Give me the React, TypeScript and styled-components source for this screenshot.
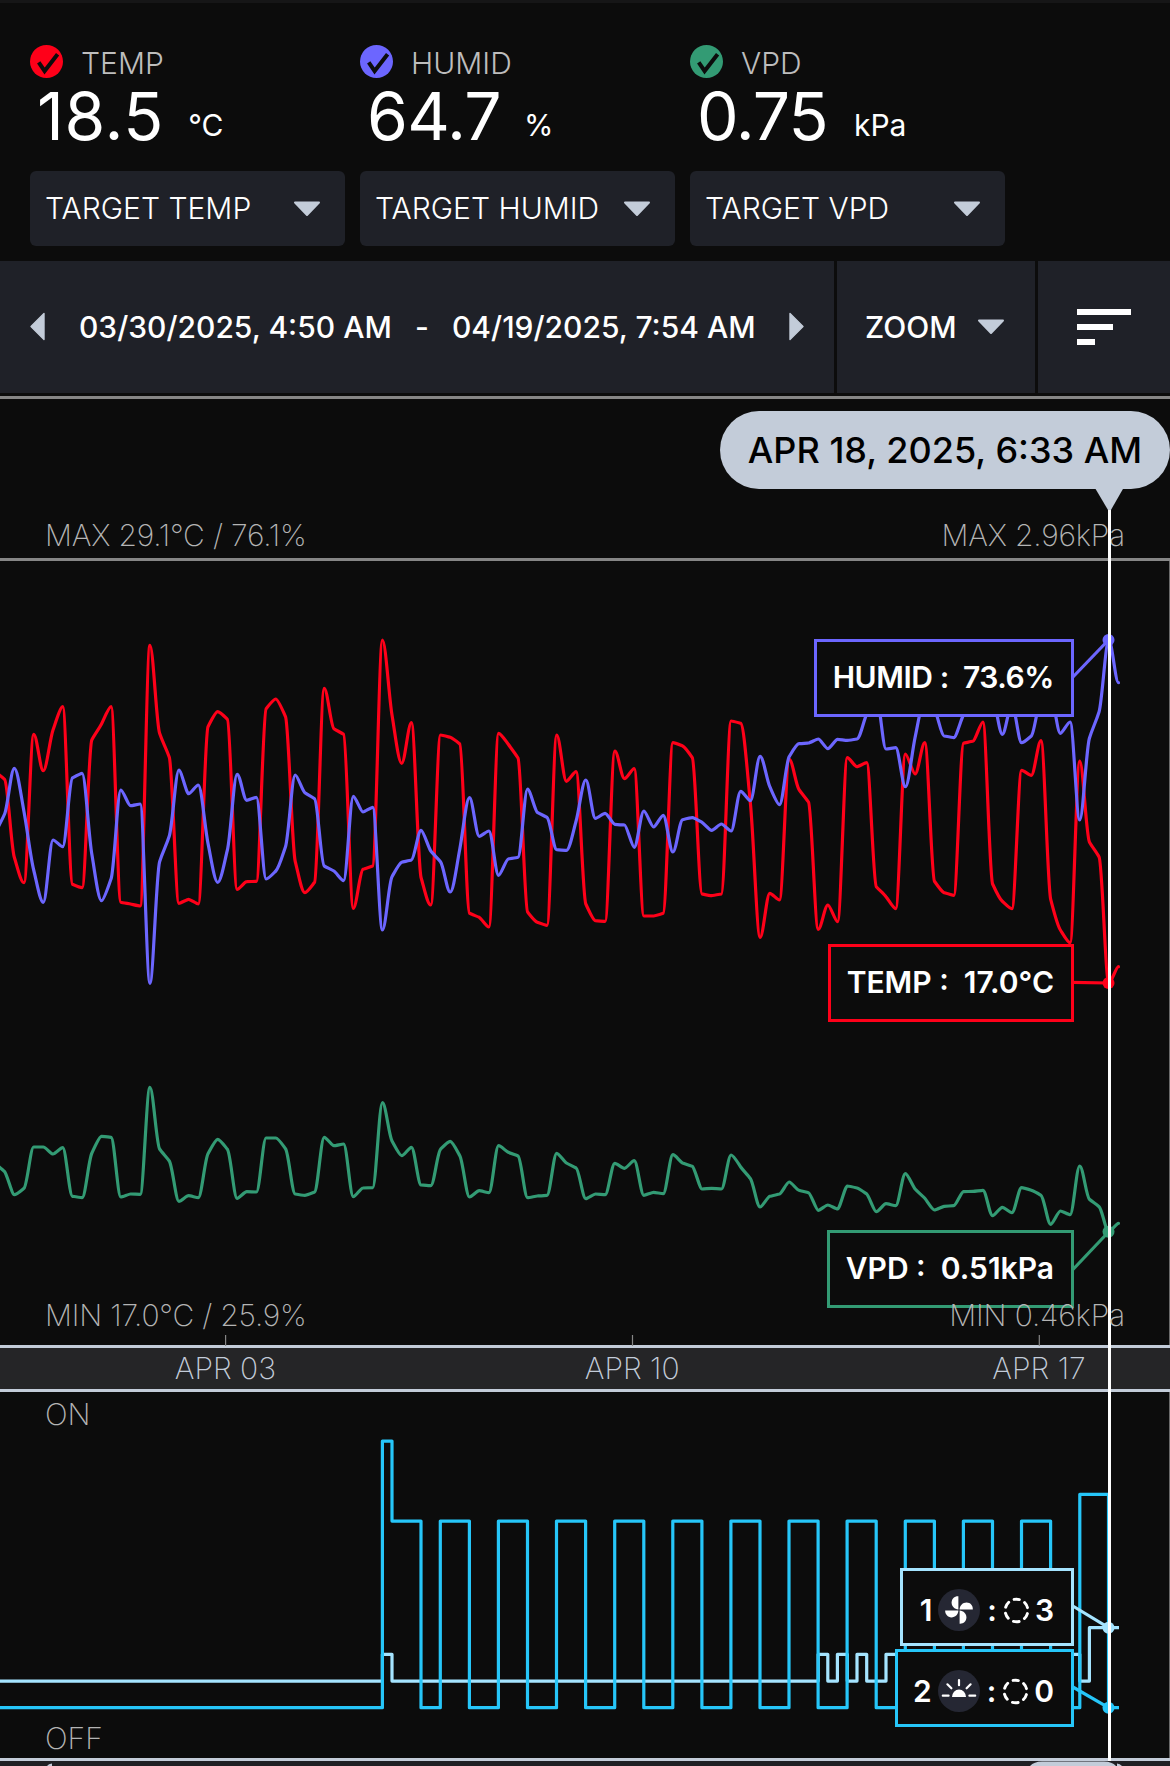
import React from "react";
import styled, { createGlobalStyle } from "styled-components";

const RED = "#ff0019";
const VIOLET = "#6c66ff";
const GREEN = "#339b74";
const CYAN = "#26c6f9";
const ICE = "#a5e4ff";
const STEEL = "#c3ccd9";
const INK = "#0c0c0c";
const SLATE = "#1f2128";

const Global = createGlobalStyle`
  * { box-sizing: border-box; }
  body { margin: 0; background: ${INK}; overflow: hidden; }
`;

const Page = styled.main`
  width: 1170px;
  height: 1766px;
  overflow: hidden;
  display: flex;
  flex-direction: column;
  background: ${INK};
  border-top: 3px solid #161617;
  color: #fff;
  font-family: Inter, "Liberation Sans", sans-serif;
  font-size: 30px;
  line-height: 30px;
`;

/* ---------- readings ---------- */

const Readings = styled.section`
  display: flex;
  gap: 15px;
  height: 258px;
  padding: 42px 30px 0;
`;

const Reading = styled.div`
  width: 315px;
  display: flex;
  flex-direction: column;
`;

const ReadingHead = styled.div`
  display: flex;
  height: 33px;
  gap: 18px;
`;

const ReadingName = styled.span`
  padding-top: 2px;
  line-height: 33px;
  font-weight: 300;
  color: #bdbdbd;
`;

const ReadingValue = styled.div`
  display: flex;
  height: 93px;
  padding-left: 7px;
`;

const Amount = styled.span<{ $track: number }>`
  font-size: 66px;
  line-height: 76px;
  font-weight: 400;
  letter-spacing: ${(p) => p.$track}px;
`;

const Unit = styled.span<{ $gap: number }>`
  margin: 32px 0 0 ${(p) => p.$gap}px;
`;

const TargetButton = styled.button`
  display: flex;
  align-items: center;
  justify-content: space-between;
  width: 100%;
  height: 75px;
  padding: 0 23px 0 15px;
  border: 0;
  border-radius: 6px;
  background: ${SLATE};
  color: #fff;
  font: inherit;
  font-weight: 300;
`;

const TargetText = styled.span`
  margin-top: -1px;
  white-space: nowrap;
`;

/* ---------- toolbar ---------- */

const Toolbar = styled.nav`
  display: grid;
  grid-template-columns: 834px 198px 1fr;
  gap: 3px;
  height: 132px;
  margin-bottom: 3px;
`;

const ToolCell = styled.div<{ $pad: string }>`
  display: flex;
  align-items: center;
  padding: ${(p) => p.$pad};
  background: ${SLATE};
`;

const DateText = styled.span<{ $width: number; $lead?: number }>`
  width: ${(p) => p.$width}px;
  margin-left: ${(p) => p.$lead ?? 0}px;
  font-weight: 500;
  white-space: nowrap;
`;

const ZoomText = styled.span`
  width: 111px;
  font-weight: 450;
`;

/* ---------- chart ---------- */

const Chart = styled.section`
  position: relative;
  display: flex;
  flex-direction: column;
`;

const Overlay = styled.svg`
  position: absolute;
  inset: 0;
  width: 1170px;
  height: 1370px;
`;

const Label = styled.span<{ $track?: number }>`
  font-weight: 200;
  color: #b4b4b4;
  letter-spacing: ${(p) => p.$track ?? 0}px;
  white-space: nowrap;
`;

const MaxBand = styled.div`
  display: flex;
  align-items: flex-end;
  justify-content: space-between;
  height: 165px;
  padding: 0 45px 8px 45px;
  border: solid #868686;
  border-width: 3px 0;
`;

const Plot = styled.div`
  display: flex;
  align-items: flex-end;
  justify-content: space-between;
  height: 784px;
  padding: 0 44px 15px 45px;
  border-right: 1px solid #6a6a6a;
`;

const Above = styled.div`
  position: relative;
  z-index: 2;
`;

const Axis = styled.div`
  display: grid;
  grid-template-columns: repeat(3, 406.8px);
  align-items: center;
  justify-items: center;
  height: 47px;
  padding: 0 0 2px 22px;
  overflow: hidden;
  background: #252527;
  border: solid ${STEEL};
  border-width: 3px 0;
`;

const AxisLabel = styled(Label)`
  color: ${STEEL};
`;

const Devices = styled.div`
  display: flex;
  flex-direction: column;
  justify-content: space-between;
  height: 366px;
  padding: 7px 45px 5px;
  border-right: 1px solid #6a6a6a;
`;

const Footer = styled.div`
  height: 8px;
  background: #1f1f23;
  border-top: 3px solid ${STEEL};
`;

const Callout = styled.div<{ $top: number; $color: string; $width: number; $track?: number }>`
  position: absolute;
  right: 96px;
  top: ${(p) => p.$top}px;
  width: ${(p) => p.$width}px;
  height: 78px;
  display: flex;
  align-items: center;
  justify-content: flex-end;
  padding: 0 17px 2px 0;
  border: 3px solid ${(p) => p.$color};
  background: ${INK};
  font-weight: 600;
  letter-spacing: ${(p) => p.$track ?? 0}px;
  white-space: pre;
`;

const DeviceIcon = styled.svg`
  width: 42px;
  height: 42px;
  margin: 9px 7px 0 6px;
`;

const Ring = styled.svg`
  width: 27px;
  height: 27px;
  margin: 9px 5px 0 6px;
`;

const DeviceText = styled.span`
  padding-top: 9px;
`;

const TimeBubble = styled.div`
  position: absolute;
  right: 0;
  top: 15px;
  width: 450px;
  height: 78px;
  display: flex;
  align-items: center;
  justify-content: center;
  border-radius: 39px;
  background: ${STEEL};
  color: #000;
  font-size: 36px;
  font-weight: 500;
  white-space: nowrap;
`;

/* ---------- data ---------- */

// One sample every four hours; values are heights on the plot, in thirds of a pixel.
const STEP = 9.686;
const FIRST = 4.6 - STEP;

const temp = [
  455, 478, 712, 788, 343, 452, 330, 260, 793, 803, 360, 312, 260, 847, 852, 858, 76, 340, 412, 850,
  838, 852, 320, 275, 298, 808, 785, 784, 266, 237, 290, 724, 818, 787, 205, 326, 343, 865, 748, 738,
  60, 285, 430, 308, 773, 855, 345, 352, 372, 880, 892, 921, 340, 373, 414, 876, 907, 916, 345, 484,
  455, 852, 902, 904, 393, 476, 446, 888, 888, 880, 368, 378, 413, 822, 827, 822, 303, 310, 550, 952,
  820, 840, 418, 508, 546, 928, 855, 905, 413, 440, 428, 800, 830, 866, 402, 462, 368, 784, 818, 826,
  370, 363, 306, 792, 844, 866, 451, 466, 362, 838, 930, 968, 423, 666, 711, 1090, 1040,
];

const humid = [
  640, 582, 445, 575, 750, 847, 660, 680, 474, 460, 702, 842, 776, 510, 557, 552, 1090, 725, 648, 450,
  521, 495, 670, 787, 690, 463, 541, 532, 777, 753, 680, 465, 518, 536, 738, 753, 782, 529, 576, 562,
  930, 770, 727, 720, 631, 693, 725, 816, 687, 533, 649, 633, 766, 717, 712, 507, 577, 592, 689, 691,
  603, 480, 595, 580, 613, 615, 682, 573, 621, 586, 696, 599, 593, 607, 631, 612, 633, 514, 542, 409,
  500, 554, 410, 371, 369, 357, 386, 358, 361, 357, 282, 230, 387, 383, 500, 352, 240, 270, 348, 353,
  285, 250, 240, 240, 343, 255, 368, 348, 240, 230, 340, 306, 600, 355, 275, 60, 188,
];

const vpd = [
  310, 335, 404, 385, 261, 261, 282, 263, 409, 413, 280, 229, 232, 411, 402, 403, 82, 267, 303, 424,
  407, 413, 281, 238, 268, 415, 395, 396, 234, 234, 266, 402, 406, 396, 232, 257, 252, 410, 384, 383,
  128, 243, 287, 262, 375, 377, 268, 244, 287, 411, 392, 398, 257, 277, 288, 413, 408, 406, 280, 309,
  324, 416, 402, 404, 310, 325, 302, 406, 397, 401, 284, 309, 319, 387, 385, 387, 285, 321, 356, 441,
  409, 402, 366, 391, 398, 451, 435, 447, 378, 384, 402, 455, 431, 437, 341, 387, 415, 450, 439, 437,
  395, 394, 391, 467, 442, 458, 383, 391, 406, 493, 453, 464, 318, 418, 440, 515, 490,
];

// Monotone cubic interpolation. Gentle segments get short handles, which keeps
// them nearly straight, while steep ones ease in and out of their samples.
function smoothPath(values: number[], base: number): string {
  const ys = values.map((v) => base + v / 3);
  const last = ys.length - 1;
  const slope = (i: number) => (ys[i + 1] - ys[i]) / STEP;
  const tangent = ys.map((_, i) => {
    if (i === 0) return slope(0);
    if (i === last) return 0;
    const a = slope(i - 1);
    const b = slope(i);
    if (a * b <= 0) return 0;
    return Math.sign(a) * Math.min(Math.abs(a), Math.abs(b)) * 1.2;
  });
  let d = `M${FIRST.toFixed(1)} ${ys[0].toFixed(1)}`;
  for (let i = 0; i < last; i++) {
    const x0 = FIRST + i * STEP;
    const rise = Math.abs(ys[i + 1] - ys[i]);
    const h = STEP * (rise < 5 ? 0.16 : rise < 24 ? 0.24 : 0.33);
    d += `C${(x0 + h).toFixed(1)} ${(ys[i] + tangent[i] * h).toFixed(1)} ${(x0 + STEP - h).toFixed(1)} ${(
      ys[i + 1] -
      tangent[i + 1] * h
    ).toFixed(1)} ${(x0 + STEP).toFixed(1)} ${ys[i + 1].toFixed(1)}`;
  }
  return d;
}

const level = (n: number) => 1707.7 - n * 26.667;

// Each pair is [x where the level starts, level].
function stepPath(steps: [number, number][], end: number): string {
  return (
    steps.map(([x, n], i) => (i === 0 ? `M${x} ${level(n)}` : `H${x}V${level(n)}`)).join("") + `H${end}`
  );
}

const lightSteps: [number, number][] = [[0, 0], [382.4, 10], [392, 7], [421, 0]];
for (let i = 0; i < 11; i++) {
  lightSteps.push([+(440.3 + i * 58.12).toFixed(1), 7], [+(469.4 + i * 58.12).toFixed(1), 0]);
}
lightSteps.push([1079.8, 8], [1108.5, 0]);

const fanSteps: [number, number][] = [
  [0, 1], [382.4, 2], [392, 1], [818.2, 2], [827.8, 1], [837.4, 2], [847.3, 1],
  [857, 2], [866.7, 1], [886, 2], [1079.8, 1], [1089.4, 3],
];

/* ---------- icons ---------- */

const CheckBadge = ({ color }: { color: string }) => (
  <svg width="33" height="33" viewBox="0 0 33 33">
    <circle cx="16.5" cy="16.5" r="16.5" fill={color} />
    <path d="M8.7 17.4 L14.6 26 L27.6 9.2" fill="none" stroke={INK} strokeWidth="4" />
  </svg>
);

const Caret = () => (
  <svg width="30" height="16" viewBox="0 0 30 16">
    <path d="M3 1.5H27L15 14Z" fill={STEEL} stroke={STEEL} strokeWidth="2" strokeLinejoin="round" />
  </svg>
);

const SideArrow = ({ flip }: { flip?: boolean }) => (
  <svg width="15" height="30" viewBox="0 0 15 30">
    <path
      d={flip ? "M1 1.5V27.5L14 14.5Z" : "M14 1.5V27.5L1 14.5Z"}
      fill={STEEL}
      stroke={STEEL}
      strokeWidth="1.4"
      strokeLinejoin="round"
    />
  </svg>
);

const SortIcon = () => (
  <svg width="54" height="36" viewBox="0 0 54 36" fill="#fff">
    <path d="M0 0H54V6H0ZM0 15H36V21H0ZM0 30H18V36H0Z" />
  </svg>
);

const FanIcon = () => (
  <DeviceIcon viewBox="0 0 42 42">
    <circle cx="21" cy="21" r="21" fill="#252733" />
    {[0, 90, 180, 270].map((a) => (
      <path
        key={a}
        transform={`rotate(${a} 21 21)`}
        d="M20.4 20.4V7.2C16.5 7 13.6 9.8 13.6 13.4C13.6 17.2 16.4 20.2 20.4 20.4Z"
        fill="#fff"
      />
    ))}
  </DeviceIcon>
);

const SunIcon = () => (
  <DeviceIcon viewBox="0 0 42 42">
    <circle cx="21" cy="21" r="21" fill="#252733" />
    <path d="M14 27A7 7.6 0 0 1 28 27Z" fill="#fff" />
    <path
      d="M4.8 25.7H10.6M31.4 25.7H37.2M9.4 14.3L13.4 18.3M32.6 14.3L28.6 18.3M21 10V15.2"
      stroke="#fff"
      strokeWidth="2.2"
      strokeLinecap="round"
    />
  </DeviceIcon>
);

const LevelRing = () => (
  <Ring viewBox="0 0 26 26">
    <circle
      cx="13"
      cy="13"
      r="10.9"
      fill="none"
      stroke="#fff"
      strokeWidth="2.8"
      strokeLinecap="round"
      strokeDasharray="5.6 5.81"
      strokeDashoffset="2.8"
      transform="rotate(-90 13 13)"
    />
  </Ring>
);

/* ---------- page ---------- */

const readings = [
  { name: "TEMP", value: "18.5", unit: "°C", color: RED, track: 0.7, gap: 24 },
  { name: "HUMID", value: "64.7", unit: "%", color: VIOLET, track: -0.7, gap: 23 },
  { name: "VPD", value: "0.75", unit: "kPa", color: GREEN, track: -1.1, gap: 26.5 },
];

const CURSOR = 1109.5;

export default function App() {
  return (
    <Page>
      <Global />
      <Readings>
        {readings.map((r) => (
          <Reading key={r.name}>
            <ReadingHead>
              <CheckBadge color={r.color} />
              <ReadingName>{r.name}</ReadingName>
            </ReadingHead>
            <ReadingValue>
              <Amount $track={r.track}>{r.value}</Amount>
              <Unit $gap={r.gap}>{r.unit}</Unit>
            </ReadingValue>
            <TargetButton>
              <TargetText>TARGET {r.name}</TargetText>
              <Caret />
            </TargetButton>
          </Reading>
        ))}
      </Readings>

      <Toolbar>
        <ToolCell $pad="0 30px">
          <SideArrow />
          <DateText $width={336} $lead={34}>03/30/2025, 4:50 AM</DateText>
          <DateText $width={37}>-</DateText>
          <DateText $width={337}>04/19/2025, 7:54 AM</DateText>
          <SideArrow flip />
        </ToolCell>
        <ToolCell $pad="0 0 0 28px">
          <ZoomText>ZOOM</ZoomText>
          <Caret />
        </ToolCell>
        <ToolCell $pad="0 0 0 39px">
          <SortIcon />
        </ToolCell>
      </Toolbar>

      <Chart>
        <MaxBand>
          <Label $track={-0.2}>MAX 29.1°C / 76.1%</Label>
          <Label $track={-0.2}>MAX 2.96kPa</Label>
        </MaxBand>
        <Plot>
          <Above>
            <Label $track={-0.2}>MIN 17.0°C / 25.9%</Label>
          </Above>
          <Above>
            <Label $track={-0.15}>MIN 0.46kPa</Label>
          </Above>
        </Plot>
        <Axis>
          <AxisLabel>APR 03</AxisLabel>
          <AxisLabel>APR 10</AxisLabel>
          <AxisLabel>APR 17</AxisLabel>
        </Axis>
        <Devices>
          <Label>ON</Label>
          <Label>OFF</Label>
        </Devices>
        <Footer />

        <Overlay viewBox="0 396 1170 1370" fill="none" strokeWidth="3.2" strokeLinejoin="round">
          <path d={smoothPath(vpd, 1060)} stroke={GREEN} strokeLinecap="round" />
          <path d={smoothPath(temp, 620)} stroke={RED} strokeLinecap="round" />
          <path d={smoothPath(humid, 620)} stroke={VIOLET} strokeLinecap="round" />
          <path d="M225.6 1335V1346M632.5 1335V1346M1039.3 1335V1346" stroke="#868686" strokeWidth="1.2" />
          <path d={stepPath(fanSteps, 1119)} stroke={ICE} />
          <path d={stepPath(lightSteps, 1119)} stroke={CYAN} />
          <path d="M1072 678L1108.5 640" stroke={VIOLET} />
          <path d="M1072 982.3L1108.5 983" stroke={RED} />
          <path d="M1072 1270.5L1108.5 1232" stroke={GREEN} />
          <path d="M1072 1605.5L1108.5 1627.7" stroke={ICE} />
          <path d="M1072 1686.5L1108.5 1707.7" stroke={CYAN} />
          <circle cx="1108.5" cy="640" r="6" fill={VIOLET} />
          <circle cx="1108.5" cy="983" r="6" fill={RED} />
          <circle cx="1108.5" cy="1231.7" r="6" fill={GREEN} />
          <circle cx="1108.5" cy="1627.7" r="6" fill={ICE} />
          <circle cx="1108.5" cy="1707.7" r="6" fill={CYAN} />
          <path d="M1030 1766Q1034 1761.5 1042 1761.5H1104Q1112 1761.5 1116 1766Z" fill={STEEL} />
          <path d="M1117 1766V1763.5Q1120 1763.5 1122 1766Z" fill={STEEL} />
          <path d="M47 1766Q48.5 1763.5 52 1763.5V1766Z" fill={STEEL} />
          <path d="M1095 488H1123.5L1109.5 512.5Z" fill={STEEL} />
          <path d={`M${CURSOR} 510V1761`} stroke="#fff" strokeWidth="3" />
        </Overlay>

        <Callout $top={243} $width={260} $color={VIOLET} $track={-0.45}>{"HUMID :  73.6%"}</Callout>
        <Callout $top={547.5} $width={246} $color={RED}>{"TEMP :  17.0°C"}</Callout>
        <Callout $top={834} $width={247} $color={GREEN}>{"VPD :  0.51kPa"}</Callout>
        <Callout $top={1171.5} $width={174} $color={ICE}>
          <DeviceText>1</DeviceText>
          <FanIcon />
          <DeviceText>:</DeviceText>
          <LevelRing />
          <DeviceText>3</DeviceText>
        </Callout>
        <Callout $top={1252.5} $width={179} $color={CYAN}>
          <DeviceText>2</DeviceText>
          <SunIcon />
          <DeviceText>:</DeviceText>
          <LevelRing />
          <DeviceText>0</DeviceText>
        </Callout>
        <TimeBubble>APR 18, 2025, 6:33 AM</TimeBubble>
      </Chart>
    </Page>
  );
}
